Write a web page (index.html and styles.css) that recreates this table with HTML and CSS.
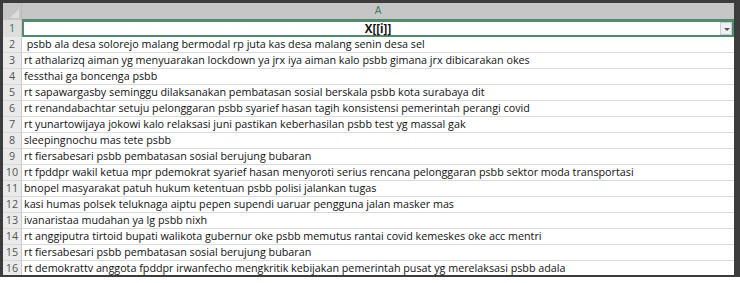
FILE: index.html
```html
<!DOCTYPE html>
<html>
<head>
<meta charset="utf-8">
<link rel="stylesheet" href="styles.css">
</head>
<body>
<div class="frame">
  <div class="sheet">
    <div class="hdr">
      <div class="corner"><span class="tri"></span></div>
      <div class="colhead">A</div>
    </div>
    <div class="row r1">
      <div class="num sel">1</div>
      <div class="cell title">X[[i]]<span class="dd"><span class="ar"></span></span></div>
    </div>
    <div class="row"><div class="num">2</div><div class="cell">&nbsp;psbb ala desa solorejo malang bermodal rp juta kas desa malang senin desa sel</div></div>
    <div class="row"><div class="num">3</div><div class="cell">rt athalarizq aiman yg menyuarakan lockdown ya jrx iya aiman kalo psbb gimana jrx dibicarakan okes</div></div>
    <div class="row"><div class="num">4</div><div class="cell">fessthai ga boncenga psbb</div></div>
    <div class="row"><div class="num">5</div><div class="cell">rt sapawargasby seminggu dilaksanakan pembatasan sosial berskala psbb kota surabaya dit</div></div>
    <div class="row"><div class="num">6</div><div class="cell">rt renandabachtar setuju pelonggaran psbb syarief hasan tagih konsistensi pemerintah perangi covid</div></div>
    <div class="row"><div class="num">7</div><div class="cell">rt yunartowijaya jokowi kalo relaksasi juni pastikan keberhasilan psbb test yg massal gak</div></div>
    <div class="row"><div class="num">8</div><div class="cell">sleepingnochu mas tete psbb</div></div>
    <div class="row"><div class="num">9</div><div class="cell">rt fiersabesari psbb pembatasan sosial berujung bubaran</div></div>
    <div class="row"><div class="num">10</div><div class="cell">rt fpddpr wakil ketua mpr pdemokrat syarief hasan menyoroti serius rencana pelonggaran psbb sektor moda transportasi</div></div>
    <div class="row"><div class="num">11</div><div class="cell">bnopel masyarakat patuh hukum ketentuan psbb polisi jalankan tugas</div></div>
    <div class="row"><div class="num">12</div><div class="cell">kasi humas polsek teluknaga aiptu pepen supendi uaruar pengguna jalan masker mas</div></div>
    <div class="row"><div class="num">13</div><div class="cell">ivanaristaa mudahan ya lg psbb nixh</div></div>
    <div class="row"><div class="num">14</div><div class="cell">rt anggiputra tirtoid bupati walikota gubernur oke psbb memutus rantai covid kemeskes oke acc mentri</div></div>
    <div class="row"><div class="num">15</div><div class="cell">rt fiersabesari psbb pembatasan sosial berujung bubaran</div></div>
    <div class="row last"><div class="num">16</div><div class="cell">rt demokrattv anggota fpddpr irwanfecho mengkritik kebijakan pemerintah pusat yg merelaksasi psbb adala</div></div>
  </div>
</div>
</body>
</html>
```

FILE: styles.css
```css
html, body {
  margin: 0;
  padding: 0;
  background: #ffffff;
}
.frame {
  width: 740px;
  height: 277px;
  box-sizing: border-box;
  border-style: solid;
  border-color: #3c3c3c;
  border-width: 3px 6px 2px 3px;
  background: #ffffff;
  overflow: hidden;
}
.sheet {
  font-family: "Open Sans", "Liberation Sans", sans-serif;
  font-size: 10.75px;
  color: #111111;
}
.hdr {
  display: flex;
  height: 17px;
  background: #c6c6c6;
}
.corner {
  width: 18px;
  position: relative;
  border-right: 1px solid #b8b8b8;
}
.tri {
  position: absolute;
  right: 2px;
  bottom: 2px;
  width: 0;
  height: 0;
  border-left: 9px solid transparent;
  border-bottom: 9px solid #dcdcdc;
}
.colhead {
  flex: 1;
  text-align: center;
  color: #3f7a5a;
  font-family: "Liberation Sans", sans-serif;
  font-size: 10px;
  line-height: 16px;
  border-bottom: 1px solid #4d8a68;
}
.row {
  display: flex;
  height: 16px;
  border-bottom: 1px solid #dadada;
  box-sizing: border-box;
}
.row.last {
  border-bottom: none;
}
.num {
  width: 18px;
  flex: none;
  background: #eaeaea;
  color: #555555;
  text-align: center;
  line-height: 15px;
  border-right: 1px solid #c8c8c8;
}
.num.sel {
  color: #2f7a50;
  background: #dedede;
}
.cell {
  flex: 1;
  padding-left: 2px;
  line-height: 15px;
  white-space: nowrap;
  overflow: hidden;
}
.r1 {
  height: 17px;
  border-bottom: none;
}
.r1 .num {
  line-height: 17px;
}
.title {
  position: relative;
  text-align: center;
  font-weight: bold;
  font-size: 11.5px;
  line-height: 13px;
  border: 2px solid #4f8c6a;
  box-sizing: border-box;
  padding-left: 0;
  overflow: visible;
}
.dd {
  position: absolute;
  right: 0;
  top: 0;
  width: 12px;
  height: 13px;
  background: #eef0f4;
  border: 1px solid #c9ccd4;
  box-sizing: border-box;
}
.ar {
  position: absolute;
  left: 3px;
  top: 5px;
  width: 0;
  height: 0;
  border-left: 3px solid transparent;
  border-right: 3px solid transparent;
  border-top: 3px solid #555;
}
```
